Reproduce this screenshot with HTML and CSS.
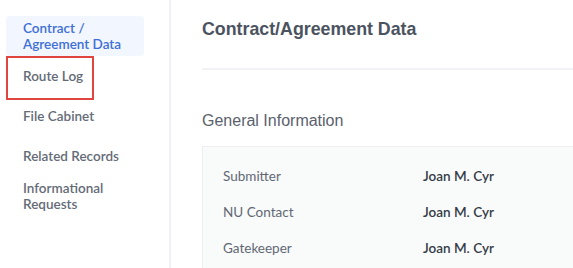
FILE: index.html
```html
<!DOCTYPE html>
<html lang="en">
<head>
    <meta charset="UTF-8">
    <meta name="viewport" content="width=device-width, initial-scale=1.0">
    <title>Contract/Agreement Data</title>
    <link rel="stylesheet" href="styles.css">
</head>
<body>
    <main class="layout">
        <nav class="sidebar">
            <a class="nav-item active" href="#">Contract /<br>Agreement Data</a>
            <a class="nav-item marked" href="#">Route Log<span class="mark"></span></a>
            <a class="nav-item" href="#">File Cabinet</a>
            <a class="nav-item" href="#">Related Records</a>
            <a class="nav-item" href="#">Informational<br>Requests</a>
        </nav>
        <section class="content">
            <div class="page-head">
                <h1>Contract/Agreement Data</h1>
            </div>
            <h2 class="section-title">General Information</h2>
            <div class="info-box">
                <div class="info-row">
                    <span class="label">Submitter</span>
                    <span class="value">Joan M. Cyr</span>
                </div>
                <div class="info-row">
                    <span class="label">NU Contact</span>
                    <span class="value">Joan M. Cyr</span>
                </div>
                <div class="info-row">
                    <span class="label">Gatekeeper</span>
                    <span class="value">Joan M. Cyr</span>
                </div>
            </div>
        </section>
    </main>
</body>
</html>
```

FILE: styles.css
```css
body{
    margin: 0;
    padding: 0;
    background: white;
    font-family: Lato, "Open Sans", sans-serif;
}
.layout{
    display: flex;
    height: 268px;
    overflow: hidden;
}
.sidebar{
    width: 163px;
    flex: none;
    padding: 16px 0 0 6px;
    border-right: 2px solid #f0f0f6;
    display: flex;
    flex-direction: column;
}
.nav-item{
    position: relative;
    display: flex;
    align-items: center;
    width: 121px;
    height: 40px;
    padding-left: 17px;
    line-height: 16px;
    font-size: 13.5px;
    font-weight: 600;
    color: #646b77;
    text-decoration: none;
}
.nav-item.active{
    background: #f2f6fe;
    border-radius: 4px;
    color: #3d6fd6;
}
.mark{
    position: absolute;
    left: 0;
    top: 0;
    width: 84px;
    height: 40px;
    border: 2px solid #e1453f;
}
.content{
    flex: 1;
    padding-left: 31px;
    min-width: 0;
}
.page-head{
    padding: 20px 0 30px;
    border-bottom: 2px solid #f1f2f5;
}
.page-head h1{
    margin: 0;
    font-family: "Liberation Sans", Arial, sans-serif;
    font-size: 17.8px;
    line-height: 18px;
    font-weight: 700;
    color: #4b5360;
}
.section-title{
    margin: 42px 0 16px;
    font-family: "Liberation Sans", Arial, sans-serif;
    font-size: 16px;
    line-height: 18px;
    font-weight: 400;
    color: #5b616c;
}
.info-box{
    background: #f9fafa;
    border: 1px solid #eceef1;
    border-right: none;
    padding: 11px 0 20px 20px;
}
.info-row{
    display: flex;
    height: 36px;
    align-items: center;
    font-size: 13.5px;
}
.label{
    width: 200px;
    color: #616874;
}
.value{
    color: #343b46;
    font-weight: 600;
}
```
